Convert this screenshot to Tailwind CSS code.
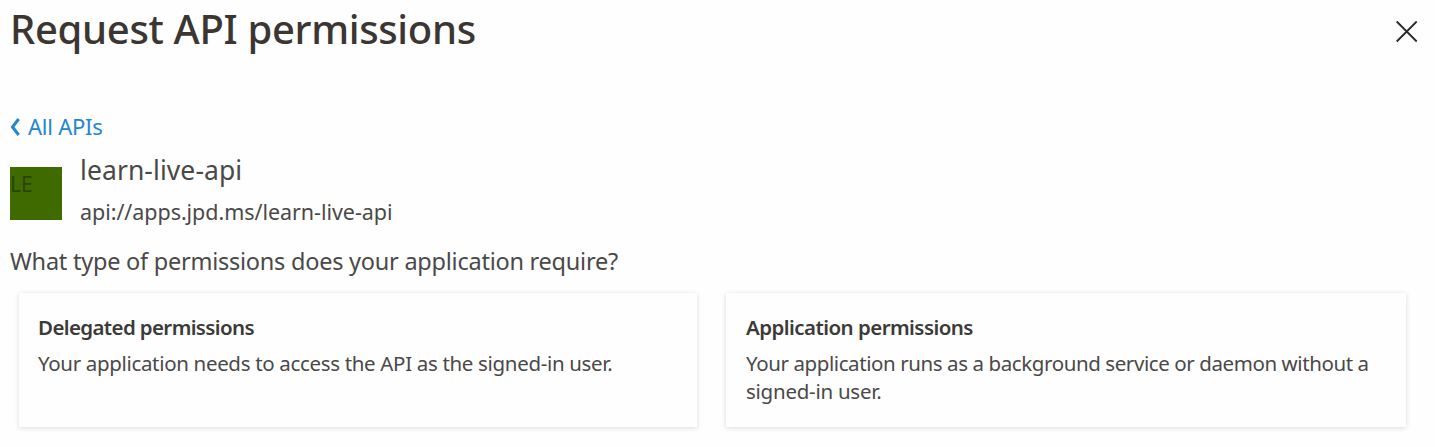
<!DOCTYPE html>
<html lang="en"><head><meta charset="utf-8"><title>Request API permissions</title>
<script src="https://cdn.jsdelivr.net/npm/@tailwindcss/browser@4"></script></head>
<body class="bg-[#fefefe] text-[#4a4948] font-['Noto_Sans',sans-serif]">
<main class="w-[1435px] h-[447px] overflow-hidden flex flex-col whitespace-nowrap">
<header class="flex justify-between h-[110px] pl-[10px] pr-[17px]">
<h1 class="h-[60px] leading-[58px] font-medium text-[40px] tracking-[-0.33px] text-[#3b3632]"><span>Request API permissions</span></h1>
<svg class="mt-5 w-[23px] h-[23px]" viewBox="0 0 23 23" fill="none" stroke="#292827" stroke-width="1.8"><path d="M1.7 1.5l20 20M21.7 1.5l-20 20"/></svg>
</header>
<a class="flex items-center h-[34px] pl-[10px] gap-[6px] text-[#2486ce] text-[22px] tracking-[-0.25px]"><svg class="w-3 h-[18px]" viewBox="0 0 12 18" fill="none" stroke="currentColor" stroke-width="3"><path d="M8.7 1L2.5 9L8.7 17"/></svg><span class="leading-[30px] pb-[2px]">All APIs</span></a>
<section class="flex h-[86px] pl-[10px] gap-[18px]">
<div class="mt-[23px] w-[52px] h-[53px] bg-[#3f6a00] text-[#29450a] text-[21px] leading-[35px]"><span>LE</span></div>
<div class="pt-[5px]"><div class="h-[42px] leading-[42px] text-[26.5px] tracking-[0.08px]"><span>learn-live-api</span></div><div class="h-[40px] leading-[42px] text-[21.5px] tracking-[-0.05px]"><span>api://apps.jpd.ms/learn-live-api</span></div></div>
</section>
<p class="pl-[10px] pt-[11px] h-[63px] leading-[40px] text-[23.5px] tracking-[-0.24px]"><span>What type of permissions does your application require?</span></p>
<section class="flex gap-[29px] pl-[19px]">
<article class="w-[678px] h-[134px] pl-[19px] pt-[20px] shadow-[0_1px_5px_rgba(0,0,0,0.14)] text-[20.5px] leading-[28px]"><h2 class="font-semibold mb-2 leading-[28px] tracking-[-0.63px] text-[#3b3a39]"><span>Delegated permissions</span></h2><p class="tracking-[-0.33px]"><span>Your application needs to access the API as the signed-in user.</span></p></article>
<article class="w-[680px] h-[134px] pl-[20px] pt-[20px] shadow-[0_1px_5px_rgba(0,0,0,0.14)] text-[20.5px] leading-[28px]"><h2 class="font-semibold mb-2 leading-[28px] tracking-[-0.55px] text-[#3b3a39]"><span>Application permissions</span></h2><p class="tracking-[-0.41px]"><span>Your application runs as a background service or daemon without a</span><br><span class="tracking-[-0.25px]">signed-in user.</span></p></article>
</section>
</main></body></html>
